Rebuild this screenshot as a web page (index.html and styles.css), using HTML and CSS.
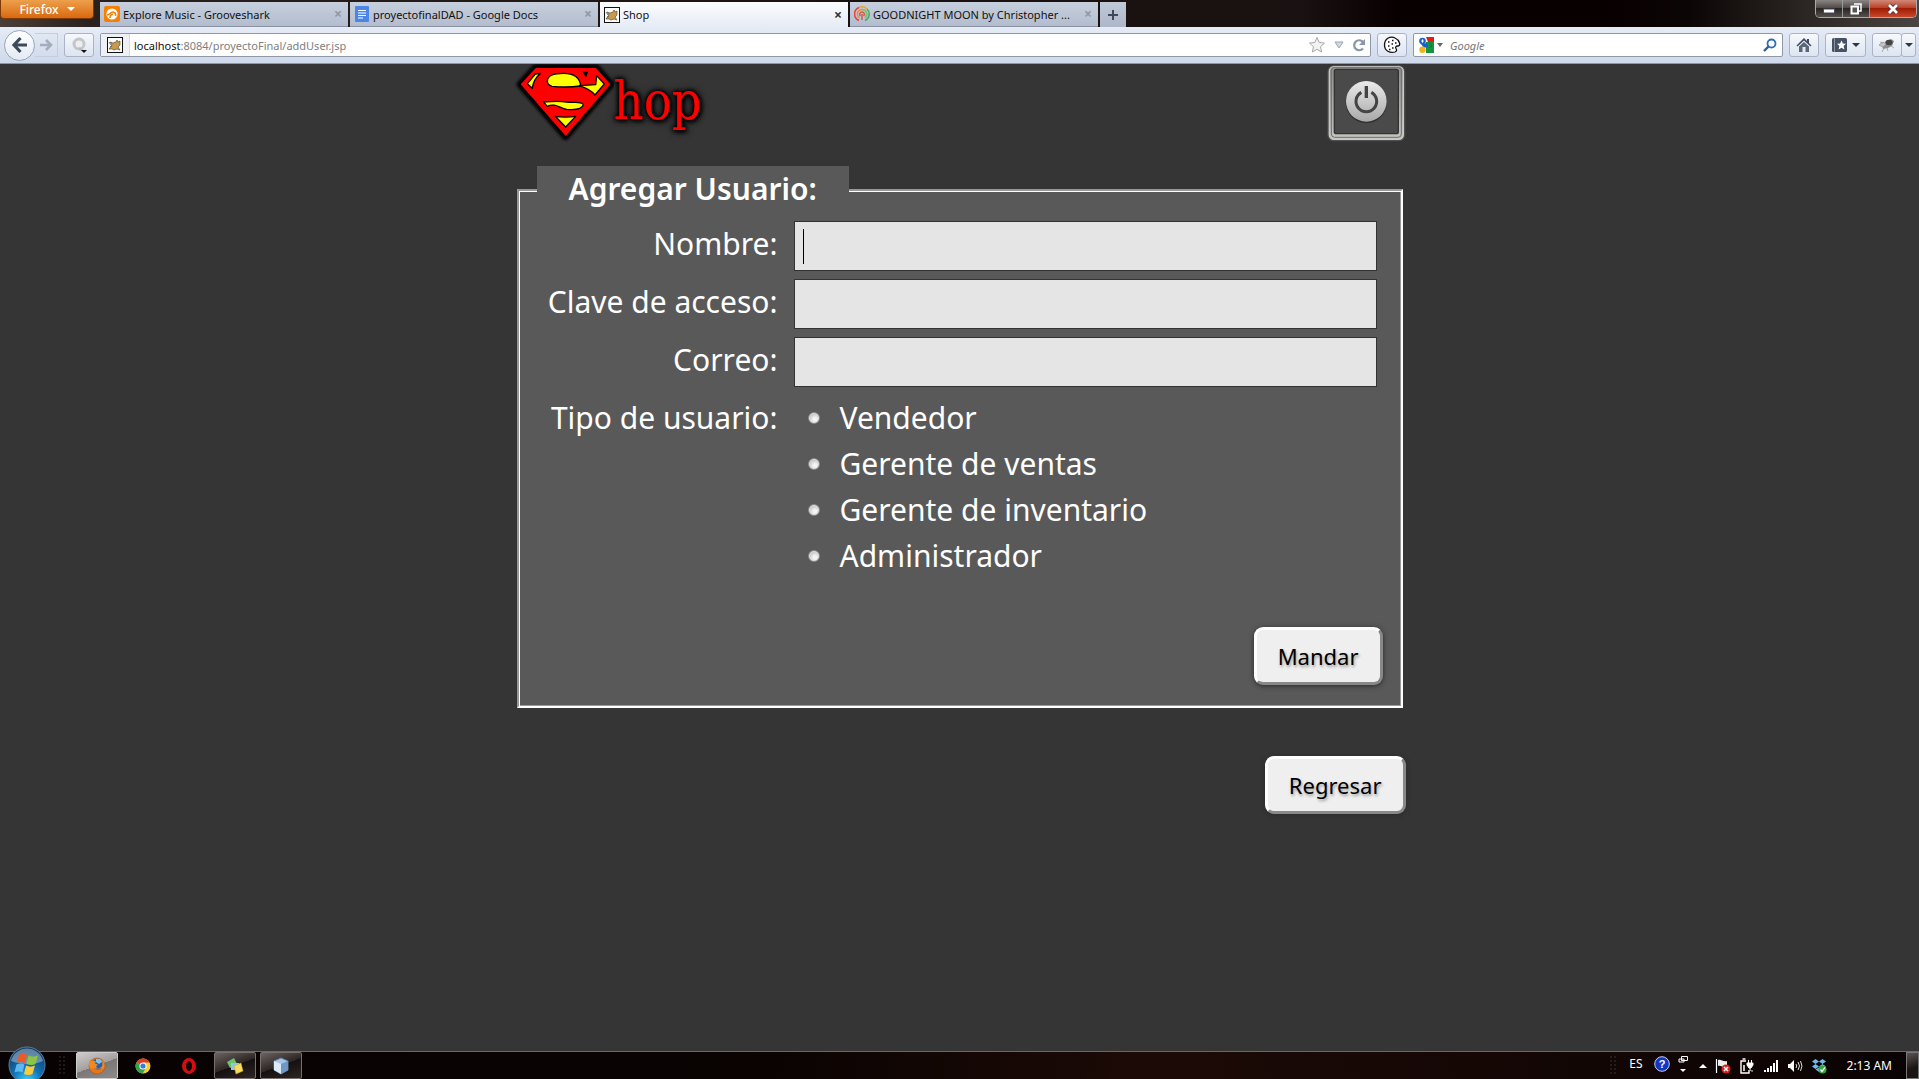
FILE: index.html
```html
<!DOCTYPE html>
<html lang="es">
<head>
<meta charset="utf-8">
<title>Shop</title>
<link rel="stylesheet" href="styles.css">
</head>
<body>
<svg class="defs" aria-hidden="true">
  <defs>
    <symbol id="cat" viewBox="0 0 16 16">
      <rect x=".5" y=".5" width="15" height="15" fill="#fff" stroke="#111"/>
      <path d="M2 12 5 8 3 5l3 1 3-1 1-2 1 2 2-1v4l-2 2 2 3-3-1-3 1-2-1z" fill="#c99a4c" stroke="#5b5040" stroke-width=".7"/>
      <path d="M2 5l2 3M3 10l2-1" stroke="#555" stroke-width=".8"/>
    </symbol>
  </defs>
</svg>

<header class="browser">
  <div class="titlebar">
    <button class="firefox">Firefox<i class="caret light"></i></button>
    <nav class="tabs">
      <div class="tab">
        <svg class="ico" viewBox="0 0 16 16"><rect width="16" height="16" rx="2" fill="#f77f00"/><circle cx="8" cy="8" r="5.600" fill="#fff"/><path d="M3 9C6 9 6 6 9 6c2 0 3 2 2.500 4M6 12c0-3 2-4 3-3.500" fill="none" stroke="#f77f00" stroke-width="1.600"/></svg>
        <a href="#">Explore Music - Grooveshark</a><button class="close" aria-label="Cerrar">×</button>
      </div>
      <div class="tab">
        <svg class="ico" viewBox="0 0 16 16"><rect x="1" width="14" height="16" rx="1" fill="#4a86e8"/><path d="M4 4.500h8M4 7h8M4 9.500h8M4 12h5" stroke="#fff" stroke-width="1.200"/></svg>
        <a href="#">proyectofinalDAD - Google Docs</a><button class="close" aria-label="Cerrar">×</button>
      </div>
      <div class="tab active">
        <svg class="ico"><use href="#cat"/></svg>
        <a href="#">Shop</a><button class="close" aria-label="Cerrar">×</button>
      </div>
      <div class="tab">
        <svg class="ico" viewBox="0 0 16 16" fill="none" stroke-width="1.500"><path d="M5 14.500A7 7 0 0 1 5 1.500" stroke="#e2433a"/><path d="M5 1.500A7 7 0 0 1 13 3" stroke="#f0a030"/><path d="M13 3a7 7 0 0 1-2 11.500" stroke="#3fae6a"/><path d="M5.500 12A4.700 4.700 0 1 1 11 11.800" stroke="#f08a3c"/><path d="M8 3.500a4.700 4.700 0 0 1 3 8.300" stroke="#7cc46a"/><path d="M6.500 10a2.300 2.300 0 1 1 3 0M8 8v6" stroke="#d65a50"/></svg>
        <a href="#">GOODNIGHT MOON by Christopher ...</a><button class="close" aria-label="Cerrar">×</button>
      </div>
      <button class="newtab" aria-label="Nueva pestaña"><svg width="12" height="12" viewBox="0 0 12 12"><path d="M6 1v10M1 6h10" stroke="#3e4a5a" stroke-width="2"/></svg></button>
    </nav>
    <div class="winctl">
      <button aria-label="Minimizar"><svg width="12" height="12" viewBox="0 0 12 12"><rect x=".5" y="6" width="11" height="4" fill="#fff" stroke="#444a5c"/></svg></button>
      <button aria-label="Restaurar"><svg width="12" height="12" viewBox="0 0 12 12"><path d="M4 1h7v7H9" fill="none" stroke="#fff" stroke-width="1.500"/><rect x="1.500" y="3.500" width="6.500" height="7" fill="#555" stroke="#fff" stroke-width="2"/></svg></button>
      <button class="x" aria-label="Cerrar ventana"><svg width="12" height="12" viewBox="0 0 12 12"><path d="M2 2l8 8M10 2l-8 8" stroke="#4b3038" stroke-width="4.500"/><path d="M2 2l8 8M10 2l-8 8" stroke="#fff" stroke-width="2.800"/></svg></button>
    </div>
  </div>
  <div class="toolbar">
    <div class="history">
      <button class="back" aria-label="Atrás"><svg width="18" height="18" viewBox="0 0 18 18"><path d="M9.500 2 3 9l6.500 7M3.500 9H16" fill="none" stroke="#3c4a5c" stroke-width="3.200"/></svg></button>
      <button class="forward" aria-label="Adelante"><svg width="14" height="14" viewBox="0 0 14 14"><path d="M7 2l5 5-5 5M12 7H1" fill="none" stroke="#a3adbd" stroke-width="2.600"/></svg></button>
    </div>
    <button class="tool" aria-label="Complemento"><svg width="18" height="18" viewBox="0 0 18 18"><circle cx="9" cy="8" r="5" fill="#eee" stroke="#c3c6ca" stroke-width="3"/><path d="M9 12l4 3" stroke="#b5b8bc" stroke-width="2"/><path d="M11 14h6l-3 3z" fill="#111"/></svg></button>
    <div class="urlbar">
      <span class="ident"><svg class="ico"><use href="#cat"/></svg></span>
      <div class="url" role="textbox" contenteditable="true" spellcheck="false" aria-label="Dirección"><b>localhost</b>:8084/proyectoFinal/addUser.jsp</div>
      <svg width="18" height="18" viewBox="0 0 18 18"><path d="M9 1.500l2.200 5 5.300.6-4 3.600 1.200 5.300L9 13.300 4.300 16l1.200-5.300-4-3.600 5.300-.6z" fill="#f2f2f2" stroke="#a7a7a7"/></svg>
      <svg width="10" height="8" viewBox="0 0 10 8"><path d="M1 1h8L5 7z" fill="#d5dae2" stroke="#9aa4b2"/></svg>
      <svg width="14" height="14" viewBox="0 0 14 14"><path d="M11 10.500A5 5 0 1 1 11 4" fill="none" stroke="#8c97a5" stroke-width="2.200"/><path d="M13 1v6H7z" fill="#8c97a5"/></svg>
    </div>
    <button class="tool" aria-label="Cookies"><svg width="18" height="18" viewBox="0 0 18 18"><path d="M12 2C7-.5 1.500 3 1.500 9S7 17.500 12 16c1.500-.6 2-2 1-3.500-.8-1.300 0-2.500 1.500-2.500 2 0 2.500-1.500 2-3S14.500 3 12 2z" fill="#fff" stroke="#111" stroke-width="1.300"/><path d="M5 6h1.500M9 4.500h1.500M12 7h1.500M5 10h1.500M8.500 8h1.500M9 12h1.500M6 13.500h1.500" stroke="#111" stroke-width="1.500"/></svg></button>
    <div class="search">
      <svg class="ico" viewBox="0 0 16 16"><path d="M0 0h16v16H0z" fill="#fff"/><path d="M8 0h8v5H10z" fill="#e01e1e"/><path d="M8 5h8v11H8z" fill="#149441"/><path d="M0 11h8v5H0z" fill="#fff"/><circle cx="4.500" cy="4" r="3.300" fill="#1a5fd0"/><ellipse cx="4.500" cy="4" rx="1" ry="1.800" fill="#fff"/><path d="M3 7l6-1 1 4-4 1z" fill="#1a5fd0"/><circle cx="4.500" cy="12.800" r="3.200" fill="#f5b21a"/><path d="M12 6l2 3-3 2" fill="none" stroke="#0b7a30"/></svg>
      <i class="caret"></i>
      <input type="text" placeholder="Google" aria-label="Buscar en Google">
      <svg width="14" height="14" viewBox="0 0 14 14"><circle cx="8.500" cy="5.500" r="4" fill="none" stroke="#2d6cb8" stroke-width="1.800"/><path d="M5.500 8.500 1 13" stroke="#2d5d9c" stroke-width="2.400"/></svg>
    </div>
    <button class="tool" aria-label="Inicio"><svg width="16" height="16" viewBox="0 0 16 16"><path d="M8 1 .5 8.500l1 1L8 3.500l6.500 6 1-1L13 6V2h-2v2z" fill="#3f4b5c"/><path d="M3 9.500 8 5l5 4.500V15h-3.500v-5h-3v5H3z" fill="#5a6778"/></svg></button>
    <button class="tool wide" aria-label="Marcadores"><svg width="16" height="16" viewBox="0 0 16 16"><rect y="1" width="15" height="14" rx="1.500" fill="#465263"/><path d="M2.500 1v14" stroke="#8a94a2"/><path d="M9.500 3.500l1.400 3 3.100.3-2.400 2.200.8 3.500-2.900-1.800-2.900 1.800.8-3.500L5 6.800l3.100-.3z" fill="#fff"/></svg><i class="caret dark"></i></button>
    <div class="split">
      <button class="tool" aria-label="Firebug"><svg width="18" height="16" viewBox="0 0 18 16"><path d="M4 9 8 4l5-2 3 2-2 5-4 2-5 1z" fill="#8d8d8d"/><ellipse cx="11" cy="5.500" rx="3.500" ry="2.800" fill="#444"/><path d="M1 8l4-3 3 2-3 3zM6 11l-2 4M9 11l1 3M13 9l3 2M5 6 2 5" fill="#c5c5c5" stroke="#999" stroke-width=".8"/></svg></button>
      <button class="tool narrow" aria-label="Más"><i class="caret dark"></i></button>
    </div>
  </div>
</header>

<main class="page">
  <div class="wrap">
    <div class="top">
      <a class="logo" href="#" aria-label="Shop">
        <svg width="100" height="78" viewBox="42 24 300 234">
          <defs><filter id="glow" x="-20%" y="-20%" width="140%" height="140%"><feGaussianBlur stdDeviation="5"/></filter></defs>
          <path d="M107 36H288L331 85 197 240 62 85Z" stroke="#000" stroke-width="24" stroke-linejoin="round" filter="url(#glow)"/>
          <path d="M107 36H288L331 85 197 240 62 85Z" fill="#f00"/>
          <g fill="#ff0" stroke="#000" stroke-width="4" stroke-linejoin="round">
            <path d="M82 83 106 54 122 52C106 65 99 80 97 97Z"/>
            <path d="M142 76C142 58 165 52 190 52 222 52 240 66 242 90 210 94 175 93 156 91 146 88 142 82 142 76Z"/>
            <path d="M238 89 287 86 290 59 313 84 285 117C275 104 262 97 238 89Z"/>
            <path d="M130 137C150 138 172 134 200 138 220 142 240 134 250 145 248 158 225 162 200 160 178 156 165 140 142 151Z"/>
            <path d="M166 181C180 184 212 184 227 181L197 213Z"/>
          </g>
          <path d="M247 47h18l-7 17z"/>
        </svg>
        <span>hop</span>
      </a>
      <button class="power" aria-label="Salir">
        <svg width="80" height="78" viewBox="316 24 240 234">
          <defs>
            <linearGradient id="frame" x1="0" y1="0" x2="0" y2="1"><stop offset="0" stop-color="#8f8f8f"/><stop offset="1" stop-color="#c4c4c0"/></linearGradient>
            <linearGradient id="disc" x1="0" y1="0" x2="0" y2="1"><stop offset="0" stop-color="#ebebeb"/><stop offset="1" stop-color="#a8a8a8"/></linearGradient>
          </defs>
          <rect x="320" y="28" width="234" height="228" rx="20" fill="#777" opacity=".4"/>
          <rect x="326" y="32" width="222" height="218" rx="14" fill="url(#frame)" stroke="#c8c8c4" stroke-width="4"/>
          <rect x="332" y="34" width="210" height="210" rx="10" fill="none" stroke="#6e6e6e" stroke-width="3"/>
          <rect x="341" y="40" width="192" height="193" rx="6" fill="#4a4a4a" stroke="#333" stroke-width="4"/>
          <circle cx="437" cy="139" r="62" fill="#2e2e2e"/>
          <circle cx="437" cy="136" r="61" fill="url(#disc)"/>
          <path d="M422 109a31 31 0 1 0 30 0" fill="none" stroke="#444" stroke-width="9"/>
          <path d="M437 90v36" stroke="#444" stroke-width="10"/>
        </svg>
      </button>
    </div>

    <form>
      <fieldset>
        <legend>Agregar Usuario:</legend>
        <div class="fields">
          <label for="nombre">Nombre:</label><input class="box focused" id="nombre" type="text">
          <label for="clave">Clave de acceso:</label><input class="box" id="clave" type="password">
          <label for="correo">Correo:</label><input class="box" id="correo" type="text">
          <span class="label" id="tipo">Tipo de usuario:</span>
          <div class="radios" role="radiogroup" aria-labelledby="tipo">
            <label><input type="radio" name="tipo">Vendedor</label>
            <label><input type="radio" name="tipo">Gerente de ventas</label>
            <label><input type="radio" name="tipo">Gerente de inventario</label>
            <label><input type="radio" name="tipo">Administrador</label>
          </div>
        </div>
        <div class="actions"><button class="btn" type="button">Mandar</button></div>
      </fieldset>
    </form>
    <div class="actions"><button class="btn" type="button">Regresar</button></div>
  </div>
</main>

<footer class="taskbar">
  <button class="start" aria-label="Inicio"><svg width="38" height="38" viewBox="0 0 38 38">
    <defs><radialGradient id="orb" cx=".5" cy=".95" r=".9"><stop offset="0" stop-color="#3fd6ff"/><stop offset=".45" stop-color="#1272b4"/><stop offset="1" stop-color="#0d3a66"/></radialGradient></defs>
    <circle cx="19" cy="19" r="18" fill="url(#orb)" stroke="#5a7f9c"/>
    <path d="M3 15a16.500 16.500 0 0 1 32 0c-8 4-22 4-32 0z" fill="#fff" opacity=".35"/>
    <path d="M11 9c3-2 5-1.500 8 0l-2 8c-3-1.500-5-1.500-8 0z" fill="#ee5a24"/><path d="M20.500 9.500c3 1.500 6 1.500 9.500 0l-2.500 8.500c-3 1.500-6 1-9 0z" fill="#8cc63e"/><path d="M8.500 18.500c3-1.500 5-1.500 8 0l-2 8c-3-1.500-5-1.500-8 0z" fill="#5cb8f0"/><path d="M18 19.500c3 1.500 6 1.500 9 0L24.500 28c-3 1.500-6 1-8.500 0z" fill="#fccb3c"/>
  </svg></button>
  <i class="grip"></i>
  <div class="apps">
    <button class="app on" aria-label="Firefox"><svg width="18" height="18" viewBox="0 0 18 18"><circle cx="9" cy="9" r="8" fill="#e87616" stroke="#a84a10" stroke-width=".5"/><circle cx="10" cy="7" r="5.500" fill="#2a5fa8"/><path d="M8 2c3-1 6 0 6 3l-3 2-3-2z" fill="#7fc1ee"/><path d="M1.500 3c1.500.2 2 1.200 3.500 1h3L7 6.500l3 1.300-2 1.700c1 2.500 5 2 6-.500 1-2 0-5-.500-6.500 3 2 3.500 6 2.500 9H2C1 9 .500 6 1.500 3z" fill="#f08a1c"/></svg></button>
    <button class="app bare" aria-label="Chrome"><svg width="16" height="16" viewBox="0 0 16 16"><circle cx="8" cy="8" r="7.500" fill="#f7cf2b"/><path d="M8 8 1.500 4.200A7.500 7.500 0 0 1 14.700 4.500H8z" fill="#dd3b2b"/><path d="M8 8 1.500 4.200A7.500 7.500 0 0 0 7.500 15.500L11 10z" fill="#35a14a"/><circle cx="8" cy="8" r="3.600" fill="#fff"/><circle cx="8" cy="8" r="2.600" fill="#3a7be0"/></svg></button>
    <button class="app bare" aria-label="Opera"><svg width="16" height="16" viewBox="0 0 16 16"><ellipse cx="8" cy="8" rx="5" ry="6" fill="none" stroke="#d40d12" stroke-width="4"/><ellipse cx="8" cy="8" rx="2.300" ry="5" fill="#120404"/></svg></button>
    <button class="app" aria-label="Notas"><svg width="18" height="18" viewBox="0 0 18 18"><path d="M1 5l7-4 3 6-7 4z" fill="#6cc46a"/><path d="M5 6l8 0v7H5z" fill="#8fc4ee"/><path d="M8 9l7-3 2 8-7 3z" fill="#f8dc5c" stroke="#c9a62c" stroke-width=".5"/></svg></button>
    <button class="app" aria-label="NetBeans"><svg width="16" height="18" viewBox="0 0 16 18"><path d="M8 1l7 3v9l-7 4-7-4V4z" fill="#a9c6e6" stroke="#5d80a8"/><path d="M1 4l7 3v10l-7-4z" fill="#dcebf8"/><path d="M8 7l7-3v9l-7 4z" fill="#6f97c4"/></svg></button>
  </div>
  <div class="tray">
    <i class="grip"></i>
    <span class="lang">ES</span>
    <svg class="raised" width="16" height="16" viewBox="0 0 16 16"><circle cx="8" cy="8" r="7.300" fill="#1436c4" stroke="#c8d0f0"/><text x="8" y="12" text-anchor="middle" class="q">?</text></svg>
    <svg width="10" height="18" viewBox="0 0 10 18" class="raised restore"><path d="M3.500 1.500h6v4h-6zM1 4h5v3H1z" fill="#120707" stroke="#fff"/><path d="M2 14h6l-3 3z" fill="#fff"/></svg>
    <svg width="8" height="5" viewBox="0 0 8 5" class="up"><path d="M0 5l4-4 4 4z" fill="#fff"/></svg>
    <svg width="16" height="16" viewBox="0 0 16 16"><path d="M1.500 1v14" stroke="#fff" stroke-width="1.200"/><path d="M3 2c3-1 5 2 9 1v6c-4 1-6-2-9-1z" fill="#eee"/><circle cx="11" cy="11" r="4.500" fill="#d8231c"/><path d="M9 9l4 4M13 9l-4 4" stroke="#fff" stroke-width="1.500"/></svg>
    <svg width="16" height="16" viewBox="0 0 16 16" fill="none" stroke="#fff"><path d="M10 12v3H2V3h5" stroke-width="1.400"/><path d="M3.500 1h3M5 7v6" stroke-width="1.500"/><path d="M8 5h6v2l-2 3h-2L8 7z" fill="#fff"/><path d="M9.500 2v3M12.500 2v3M11 10c0 3 1 3 3 3"/></svg>
    <svg width="16" height="14" viewBox="0 0 16 14" fill="#fff"><path d="M1 11h2v2H1zM4 9h2v4H4zM7 7h2v6H7zM10 4h2v9h-2zM13 1h2v12h-2z"/></svg>
    <svg width="16" height="14" viewBox="0 0 16 14"><path d="M1 5h2l4-4v12L3 9H1z" fill="#fff"/><path d="M9 5q1.500 2 0 4M11 3q3 4 0 8M13.500 2q3 5 0 10" fill="none" stroke="#ddd"/></svg>
    <svg width="16" height="16" viewBox="0 0 16 16"><path d="M4.500 1 8 3.500 4.500 6 1 3.500zM11.500 1 15 3.500 11.500 6 8 3.500zM4.500 6 8 8.500 4.500 11 1 8.500zM11.500 6 15 8.500 11.500 11 8 8.500zM8 9.500l3.500 2L8 14l-3.500-2.500z" fill="#6fb9ee"/><circle cx="11.500" cy="11.500" r="4" fill="#37a63c"/><path d="M9.500 11.500l1.500 2 3-4" fill="none" stroke="#fff" stroke-width="1.300"/></svg>
    <time class="clock">2:13 AM</time>
    <button class="desktop" aria-label="Mostrar escritorio"></button>
  </div>
</footer>
</body>
</html>
```
FILE: styles.css
```css
* { box-sizing: border-box; }

body {
  margin: 0;
  min-height: 100vh;
  display: flex;
  flex-direction: column;
  background: #353535;
  font-family: "Noto Sans", "Open Sans", sans-serif;
  font-size: 12px;
}

button { font: inherit; padding: 0; border: 0; background: none; cursor: pointer; }
a { color: inherit; text-decoration: none; }
svg { display: block; flex: none; }
.defs { position: absolute; width: 0; height: 0; }
.ico { width: 16px; height: 16px; }

.caret {
  flex: none;
  border: 3px solid transparent;
  border-top: 4px solid #666;
  border-bottom: 0;
}
.caret.light { border-width: 4px 4px 0; border-top-color: #fff; }
.caret.dark { border-width: 4px 4px 0; border-top-color: #2d3745; }

/* Browser window */
.titlebar {
  display: flex;
  height: 27px;
  background: linear-gradient(90deg, #4a3f38 0, #2a201c 90px, #1a1010 900px, #1a1212 1300px, #080000 1400px, #080000 1600px, #0c0505 88%, #4a4542 100%);
}
.firefox {
  width: 94px;
  height: 19px;
  display: flex;
  align-items: center;
  justify-content: center;
  gap: 8px;
  color: #fff;
  font-weight: 500;
  background: linear-gradient(#eda04c, #d9690f);
  border: 1px solid #7c3a08;
  border-top: 0;
  border-radius: 0 0 4px 4px;
}
.tabs { display: flex; flex: 1; gap: 2px; padding: 2px 0 0 6px; }
.tab {
  width: 248px;
  display: flex;
  align-items: center;
  gap: 3px;
  padding: 0 4px;
  background: linear-gradient(#c6cfdd, #b3bdce);
  border-bottom: 1px solid #8a93a3;
  font-size: 11px;
  color: #111;
}
.tab a { flex: 1; white-space: nowrap; }
.tab.active { background: linear-gradient(#fbfcfe, #e6ecf6); border-bottom: 0; }
.close { width: 12px; font-size: 14px; font-weight: 700; line-height: 16px; color: #8f98a6; }
.active .close { color: #333; }
.newtab {
  width: 26px;
  display: grid;
  place-items: center;
  background: linear-gradient(#c0c9d8, #adb7c8);
}
.winctl {
  display: flex;
  height: 18px;
  margin-right: 2px;
  border: 1px solid #aaa;
  border-top: 0;
  border-radius: 0 0 5px 5px;
  overflow: hidden;
}
.winctl button {
  width: 27px;
  display: grid;
  place-items: center;
  background: linear-gradient(#8a8684, #4a4543 50%, #2a2523 50%, #55504e);
  border-right: 1px solid #999;
}
.winctl .x { width: 46px; border: 0; background: linear-gradient(#d08878, #b83a20 50%, #a01c04 50%, #c8482c); }

.toolbar {
  display: flex;
  align-items: center;
  gap: 6px;
  height: 37px;
  padding: 0 3px 0 4px;
  background: linear-gradient(#e6ecf6, #ced9eb);
  border-bottom: 1px solid #8d96a6;
}
.history { display: flex; align-items: center; width: 54px; }
.back {
  width: 31px;
  height: 31px;
  display: grid;
  place-items: center;
  border: 1px solid #9aa5b8;
  border-radius: 50%;
  background: linear-gradient(#fff, #e3eaf4);
}
.forward { width: 23px; height: 24px; display: grid; place-items: center; border: 1px solid #c5cedd; border-left: 0; }
.tool {
  width: 30px;
  height: 24px;
  display: flex;
  align-items: center;
  justify-content: center;
  gap: 4px;
  border: 1px solid #aab4c6;
  border-radius: 3px;
  background: linear-gradient(#f6f8fc, #dde5f1);
}
.tool.wide { width: 41px; }
.tool.narrow { width: 15px; margin-left: -1px; }
.split { display: flex; }
.urlbar, .search {
  display: flex;
  align-items: center;
  height: 24px;
  background: #fff;
  border: 1px solid #8f98a8;
  border-radius: 2px;
}
.urlbar { flex: 1; gap: 8px; padding-right: 4px; }
.ident { height: 100%; padding: 0 6px; display: flex; align-items: center; background: #eef0f4; border-right: 1px solid #d5d9e0; }
.url { flex: 1; margin-left: -4px; font-size: 11px; color: #808080; white-space: nowrap; }
.url b { font-weight: 400; color: #111; }
.search { width: 370px; gap: 3px; padding: 0 5px 0 4px; }
.search input { flex: 1; min-width: 0; border: 0; padding: 0 0 0 4px; background: none; font: italic 11px "Noto Sans", sans-serif; }
.search input::placeholder { color: #777; }

/* Page */
.page { flex: 1; font-size: 30px; color: #fff; }
.wrap { max-width: 892px; margin: 0 auto; }
.top { display: flex; justify-content: space-between; margin-bottom: 24px; }
.logo { display: flex; color: #f00; }
.logo span {
  font-family: "DejaVu Serif Condensed", "DejaVu Serif", serif;
  font-size: 52px;
  line-height: 74px;
  text-shadow: 0 0 4px #000, 0 0 4px #000, 2px 2px 5px #000, 0 0 8px #000;
}
fieldset {
  margin: 0 3px;
  padding: 8px 18px 21px;
  border: 2px solid;
  border-color: #999 #fff #fff #999;
  box-shadow: inset 1px 1px #fff, inset -1px -1px #999;
  background: #595959;
  min-width: 0;
}
legend { padding: 0 32px 2px; background: #595959; font-weight: 600; line-height: 45px; }
.fields {
  display: grid;
  grid-template-columns: 241px 1fr;
  gap: 8px 16px;
  margin-right: 6px;
  line-height: 46px;
}
.fields > label, .label { text-align: right; white-space: nowrap; }
.box {
  width: 100%;
  height: 50px;
  padding: 4px 8px;
  border: 1px solid #333;
  background: #e5e5e5;
  font: inherit;
  color: #000;
}
.box:focus { outline: 0; }
.box.focused { background: linear-gradient(#000, #000) 8px 7px / 1px 35px no-repeat #e5e5e5; }
.radios { display: flex; flex-direction: column; padding-left: 14px; }
.radios label { display: flex; align-items: center; gap: 20px; }
.radios input {
  appearance: none;
  width: 12px;
  height: 12px;
  margin: 0;
  border: 1px solid #8a8a8a;
  border-radius: 50%;
  background: radial-gradient(circle at 60% 65%, #f4f4f4 20%, #b0b3b8 80%);
  box-shadow: inset 0 0 0 1px #e4e4e4;
}
.actions { display: flex; justify-content: flex-end; margin-top: 48px; }
.btn {
  padding: 0 21px;
  border: 3px solid;
  border-color: #fff #888 #888 #fff;
  border-radius: 9px;
  background: #efefef;
  color: #000;
  font-size: 22px;
  font-weight: 400;
  line-height: 52px;
  text-shadow: 1px 2px 3px #999;
  box-shadow: 0 1px 5px #2a2a2a;
}

/* Taskbar */
.taskbar {
  display: flex;
  height: 28px;
  background: linear-gradient(90deg, #080202, #0a0302 40%, #1c0a06 60%, #0a0303);
  border-top: 1px solid #6e6865;
  color: #fff;
}
.start { width: 38px; height: 33px; margin: -6px 12px 0 8px; overflow: hidden; position: relative; }
.grip { width: 8px; margin: 3px 0; background: radial-gradient(circle, #555 0, transparent 1px) 0 0 / 4px 4px; }
.apps { display: flex; gap: 4px; margin-left: 10px; }
.app {
  width: 42px;
  display: grid;
  place-items: center;
  border: 1px solid #77706e;
  border-radius: 2px;
  background: linear-gradient(160deg, #6a6462, #2c2422 50%, #151010 50%, #2c2624);
}
.app.on { background: linear-gradient(160deg, #cfcccb, #a39f9e 50%, #7b7776 50%, #8f8b8a); border-color: #ccc; }
.app.bare { background: none; border-color: transparent; }
.tray { margin-left: auto; display: flex; align-items: center; gap: 8px; }
.tray .grip { align-self: stretch; }
.lang { margin: 0 3px 4px 4px; }
.raised { margin-bottom: 4px; }
.q { font: 700 11px "Liberation Sans", sans-serif; fill: #fff; }
.restore { margin-right: 3px; }
.clock { margin: 0 6px 0 12px; }
.desktop { align-self: stretch; width: 13px; border: 1px solid #777; background: linear-gradient(160deg, #5a5452, #1a1413 60%); }
```
